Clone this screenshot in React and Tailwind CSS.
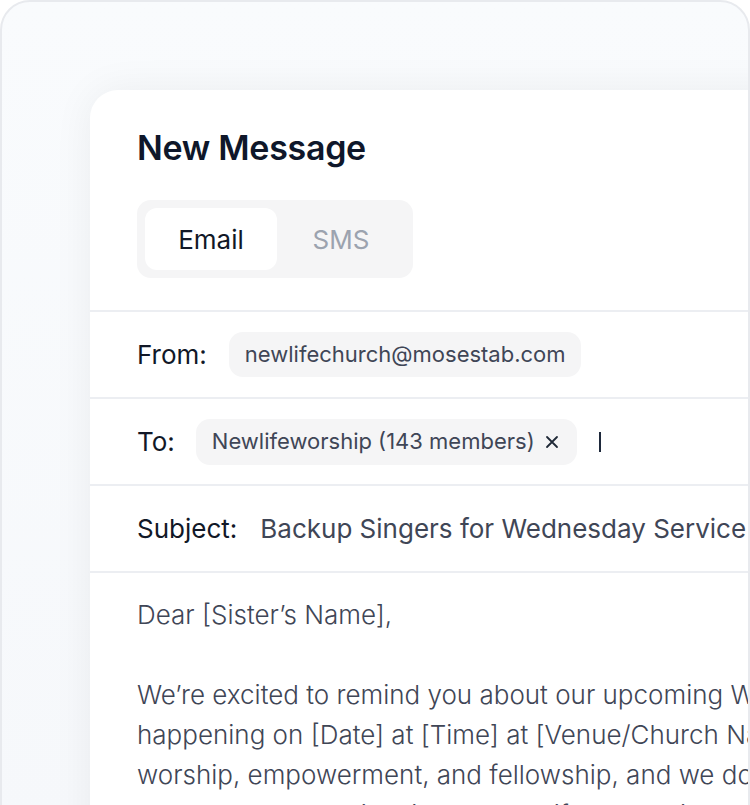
const lines = [
  "We’re excited to remind you about our upcoming Wednesday Service,",
  "happening on [Date] at [Time] at [Venue/Church Name]. It’s a night of",
  "worship, empowerment, and fellowship, and we don’t want you to miss it.",
  "Come ready to be inspired and uplifted by a time of fellowship and praise.",
];

const App = () => {
  return (
    <div className="h-[805px] w-[750px] overflow-hidden bg-white" style={{ fontFamily: "Inter, 'Noto Sans', sans-serif" }}>
      <div className="h-[830px] w-[750px] overflow-hidden rounded-t-[30px] border-2 border-[#e8eaee] bg-gradient-to-b from-[#f9fbfd] to-[#f6f8fb] pl-[88px] pt-[88px]">
        <div className="h-[760px] w-[720px] rounded-tl-[28px] bg-white shadow-[0_0_40px_rgba(15,23,42,0.06)]">
          <div className="pl-[47px] pr-12 pt-[35px] pb-[32px]">
            <h1 className="text-[34px] font-semibold leading-[46px] tracking-[-0.3px] text-[#0f172a]">New Message</h1>
            <div className="mt-[29px] inline-flex h-[78px] items-center rounded-[14px] bg-[#f5f5f6] p-2">
              <div className="flex h-[62px] w-[132px] items-center justify-center rounded-[12px] bg-white text-[26px] text-[#111827]">Email</div>
              <div className="flex h-[62px] w-[128px] items-center justify-center text-[26px] text-[#9ca3af]">SMS</div>
            </div>
          </div>

          <div className="flex h-[87px] items-center border-t-2 border-[#eceef2] pl-[47px]">
            <span className="text-[26px] text-[#111827]">From:</span>
            <span className="ml-[22px] flex h-[45px] items-center rounded-[14px] bg-[#f5f5f6] pl-4 pr-[15px] text-[22px] text-[#3f4656]">newlifechurch@mosestab.com</span>
          </div>

          <div className="flex h-[87px] items-center border-t-2 border-[#eceef2] pl-[47px]">
            <span className="text-[26px] text-[#111827]">To:</span>
            <span className="ml-[21px] flex h-[46px] items-center gap-[10px] rounded-[14px] bg-[#f5f5f6] pl-4 pr-[18px] text-[22px] text-[#3f4656]">
              Newlifeworship (143 members)
              <svg width="14" height="14" viewBox="0 0 14 14" className="text-[#1f2937]">
                <path d="M2 2 L12 12 M12 2 L2 12" stroke="currentColor" strokeWidth="1.8" strokeLinecap="round" />
              </svg>
            </span>
            <span className="ml-[22px] h-[20px] w-[2px] bg-[#1e293b]" />
          </div>

          <div className="flex h-[87px] items-center whitespace-nowrap border-t-2 border-[#eceef2] pl-[47px]">
            <span className="text-[26px] text-[#111827]">Subject:</span>
            <span className="ml-[23px] text-[26px] text-[#3f4656]">Backup Singers for Wednesday Service</span>
          </div>

          <div className="border-t-2 border-[#eceef2] pl-[47px] pt-[22px] text-[26px] font-light leading-[40px] text-[#3f4656]">
            <p className="whitespace-nowrap">Dear [Sister’s Name],</p>
            <div className="mt-10">
              {lines.map((l) => (
                <p key={l} className="whitespace-nowrap">{l}</p>
              ))}
            </div>
          </div>
        </div>
      </div>
    </div>
  );
};

export default App;
